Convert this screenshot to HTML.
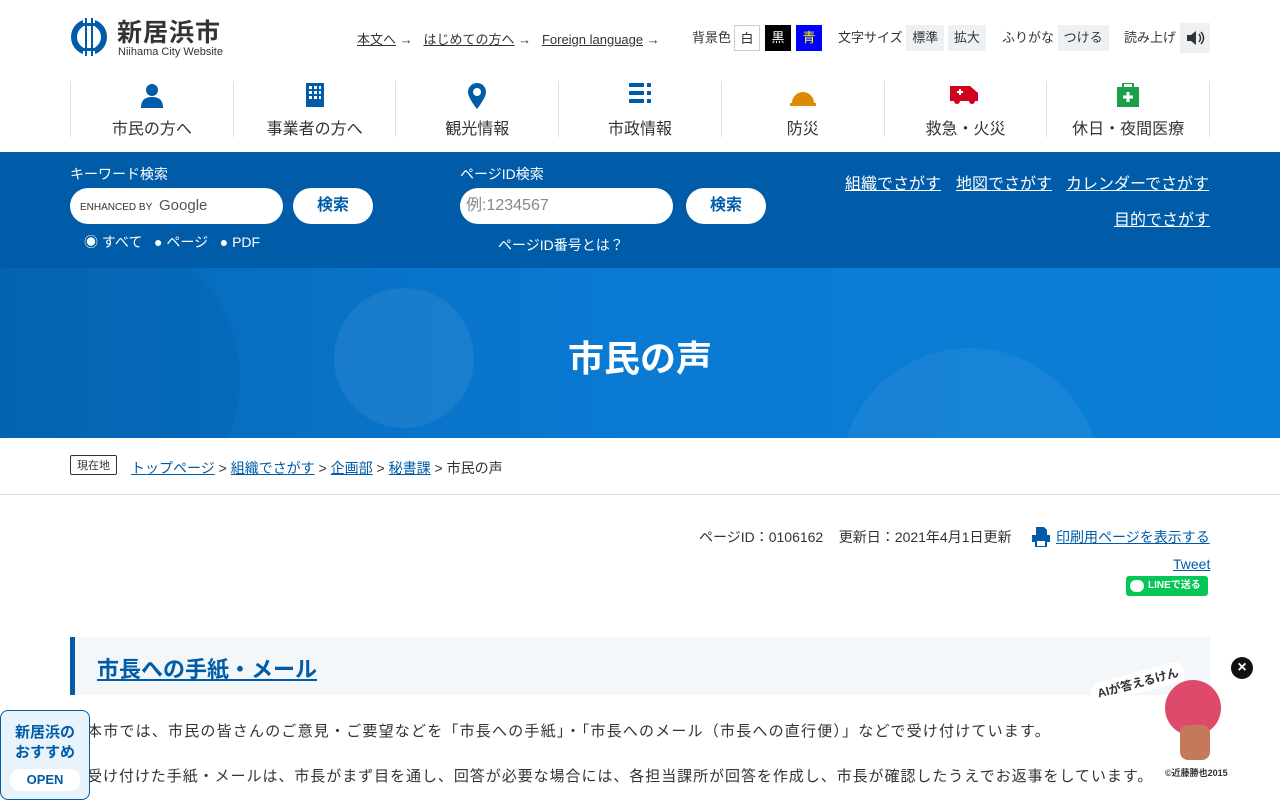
<!DOCTYPE html>
<html lang="ja"><head><meta charset="utf-8">
<style>
*{box-sizing:border-box;margin:0;padding:0}
body{width:1280px;height:800px;overflow:hidden;background:#fff;font-family:"Liberation Sans","Noto Sans CJK JP",sans-serif;color:#333;position:relative}
a{color:inherit}
.abs{position:absolute}
.top a{font-size:13px;color:#333}
.btn{display:inline-block;background:#eef1f4;font-size:13px;padding:0 6px;height:26px;line-height:26px}
.sq{position:absolute;top:25px;width:26px;height:26px;line-height:26px;text-align:center;font-size:13px}
.nav{position:absolute;top:81px;left:70px;width:1140px;height:56px;display:flex}
.nav div{flex:1;border-left:1px solid #d6e0ea;text-align:center;font-size:16px;color:#333;position:relative}
.nav div:last-child{border-right:1px solid #d6e0ea}
.nav span{position:absolute;top:34px;left:0;right:0}
.nav svg{position:absolute;top:2px;left:50%;transform:translateX(-50%)}
.sb{position:absolute;top:152px;left:0;width:1280px;height:116px;background:#005ca8;color:#fff}
.pill{position:absolute;background:#fff;border-radius:18px;height:36px}
.sbtn{position:absolute;background:#fff;border-radius:18px;height:36px;width:80px;color:#005ca8;font-weight:bold;font-size:16px;text-align:center;line-height:36px}
.hero{position:absolute;top:268px;left:0;width:1280px;height:170px;background:linear-gradient(90deg,#0568b8,#0a7ad3 50%,#0a7fd6);overflow:hidden}
.rl a{color:#fff;font-size:16px;position:absolute;white-space:nowrap}
</style></head><body>
<svg class="abs" style="left:70px;top:16px" width="38" height="42" viewBox="0 0 38 42"><circle cx="19" cy="21" r="15" fill="none" stroke="#005ca8" stroke-width="6"/><rect x="13" y="2" width="12" height="38" fill="#fff"/><rect x="15" y="2" width="2" height="38" fill="#005ca8"/><rect x="21" y="2" width="2" height="38" fill="#005ca8"/><rect x="13" y="7" width="12" height="3" fill="#005ca8"/><rect x="13" y="32" width="12" height="3" fill="#005ca8"/></svg>
<div class="abs" style="left:117px;top:13px;font-size:25px;font-weight:bold;color:#333;letter-spacing:1px">新居浜市</div>
<div class="abs" style="left:118px;top:46px;font-size:11px;color:#333">Niihama City Website</div>
<div class="abs top" style="left:357px;top:29px;font-size:13px"><a href="#">本文へ</a> → &nbsp;&nbsp;<a href="#">はじめての方へ</a> → &nbsp;&nbsp;<a href="#">Foreign language</a> →</div>
<div class="abs" style="left:692px;top:25px;font-size:13px;line-height:26px">背景色</div>
<div class="sq" style="left:734px;background:#fff;border:1px solid #ccc">白</div>
<div class="sq" style="left:765px;background:#000;color:#fff">黒</div>
<div class="sq" style="left:796px;background:#0000ff;color:#ff0">青</div>
<div class="abs" style="left:838px;top:25px;font-size:13px;line-height:26px">文字サイズ <span class="btn">標準</span> <span class="btn">拡大</span></div>
<div class="abs" style="left:1002px;top:25px;font-size:13px;line-height:26px">ふりがな <span class="btn">つける</span></div>
<div class="abs" style="left:1124px;top:23px;font-size:13px;line-height:30px">読み上げ</div>
<div class="abs" style="left:1180px;top:23px;width:30px;height:30px;background:#eef1f4"><svg width="30" height="30" viewBox="0 0 30 30"><path d="M7 12h4l5-4v14l-5-4H7z" fill="#333"/><path d="M19 11q3 4 0 8M21 9q5 6 0 12" stroke="#333" stroke-width="1.5" fill="none"/></svg></div>
<div class="nav">
<div><svg width="24" height="26" viewBox="0 0 24 26"><circle cx="12" cy="7" r="6" fill="#005ca8"/><path d="M1 25c0-8 4-11 11-11s11 3 11 11z" fill="#005ca8"/></svg><span>市民の方へ</span></div>
<div><svg width="18" height="24" viewBox="0 0 18 24"><rect width="18" height="24" fill="#005ca8"/><g fill="#fff"><rect x="3" y="3" width="3" height="3"/><rect x="8" y="3" width="3" height="3"/><rect x="13" y="3" width="2" height="3"/><rect x="3" y="8" width="3" height="3"/><rect x="8" y="8" width="3" height="3"/><rect x="13" y="8" width="2" height="3"/><rect x="3" y="13" width="3" height="3"/><rect x="8" y="13" width="3" height="3"/><rect x="13" y="13" width="2" height="3"/></g></svg><span>事業者の方へ</span></div>
<div><svg width="18" height="26" viewBox="0 0 18 26"><path d="M9 0a9 9 0 0 1 9 9c0 6-9 17-9 17S0 15 0 9a9 9 0 0 1 9-9z" fill="#005ca8"/><circle cx="9" cy="9" r="4" fill="#fff"/></svg><span>観光情報</span></div>
<div><svg width="22" height="20" viewBox="0 0 22 20"><g fill="#005ca8"><rect width="15" height="4"/><rect x="18" width="4" height="4"/><rect y="8" width="15" height="4"/><rect x="18" y="8" width="4" height="4"/><rect y="16" width="15" height="4"/><rect x="18" y="16" width="4" height="4"/></g></svg><span>市政情報</span></div>
<div><svg width="26" height="26" viewBox="0 0 26 26"><path d="M2 20a11 11 0 0 1 22 0z M0 20h26v3H0z" fill="#dd8a00"/></svg><span>防災</span></div>
<div><svg width="30" height="22" viewBox="0 0 30 22"><path d="M0 3h20l8 7v8H0z" fill="#d0021b"/><circle cx="7" cy="18" r="3" fill="#d0021b"/><circle cx="22" cy="18" r="3" fill="#d0021b"/><path d="M7 9h6M10 6v6" stroke="#fff" stroke-width="2"/></svg><span>救急・火災</span></div>
<div><svg width="22" height="24" viewBox="0 0 22 24"><rect y="4" width="22" height="20" fill="#1a9f4a"/><rect x="6" y="0" width="10" height="5" fill="none" stroke="#1a9f4a" stroke-width="2"/><path d="M11 9v10M6 14h10" stroke="#fff" stroke-width="3"/></svg><span>休日・夜間医療</span></div>
</div>
<div class="sb">
<div class="abs" style="left:70px;top:12px;font-size:14px">キーワード検索</div>
<div class="pill" style="left:70px;top:36px;width:213px;font-size:10px;color:#333;line-height:36px;padding-left:10px">ENHANCED BY <span style="font-size:15px;color:#555">&nbsp;Google</span></div>
<div class="sbtn" style="left:293px;top:36px">検索</div>
<div class="abs" style="left:84px;top:80px;font-size:14px">◉ すべて &nbsp;&nbsp;● ページ &nbsp;&nbsp;● PDF</div>
<div class="abs" style="left:460px;top:12px;font-size:14px">ページID検索</div>
<div class="pill" style="left:460px;top:36px;width:213px;font-size:16px;color:#888;line-height:36px;padding-left:6px">例:1234567</div>
<div class="sbtn" style="left:686px;top:36px">検索</div>
<div class="abs" style="left:498px;top:83px;font-size:14px">ページID番号とは？</div>
<div class="rl"><a href="#" style="left:845px;top:18px">組織でさがす</a><a href="#" style="left:956px;top:18px">地図でさがす</a><a href="#" style="left:1066px;top:18px">カレンダーでさがす</a><a href="#" style="left:1114px;top:54px">目的でさがす</a></div>
</div>
<div class="hero">
<div class="abs" style="left:334px;top:20px;width:140px;height:140px;border-radius:50%;background:rgba(255,255,255,.07)"></div>
<div class="abs" style="left:840px;top:80px;width:260px;height:260px;border-radius:50%;background:rgba(255,255,255,.06)"></div>
<div class="abs" style="left:-60px;top:-40px;width:300px;height:300px;border-radius:50%;background:rgba(0,0,0,.04)"></div>
<div class="abs" style="left:0;right:0;top:62px;text-align:center;color:#fff;font-size:36px;font-weight:bold">市民の声</div>
</div>
<div class="abs" style="left:70px;top:455px;font-size:11px;border:1px solid #333;border-radius:2px;padding:1px 6px">現在地</div>
<div class="abs" style="left:131px;top:458px;font-size:14px;color:#333"><a href="#" style="color:#005ca8">トップページ</a> &gt; <a href="#" style="color:#005ca8">組織でさがす</a> &gt; <a href="#" style="color:#005ca8">企画部</a> &gt; <a href="#" style="color:#005ca8">秘書課</a> &gt; 市民の声</div>
<div class="abs" style="left:0;top:494px;width:1280px;height:1px;background:#ddd"></div>
<div class="abs" style="left:699px;top:527px;font-size:14px">ページID：0106162 &nbsp;&nbsp;&nbsp;更新日：2021年4月1日更新</div>
<svg class="abs" style="left:1032px;top:527px" width="18" height="20" viewBox="0 0 18 20"><path d="M4 0h8l3 3v5H4z M0 8h18v7h-3v5H3v-5H0z" fill="#005ca8"/><rect x="5" y="14" width="8" height="5" fill="#fff"/></svg>
<a class="abs" href="#" style="left:1056px;top:527px;font-size:14px;color:#005ca8">印刷用ページを表示する</a>
<a class="abs" href="#" style="left:1173px;top:556px;font-size:14px;color:#005ca8">Tweet</a>
<div class="abs" style="left:1126px;top:576px;width:82px;height:20px;background:#06c755;border-radius:3px;color:#fff;font-size:10px;font-weight:bold;line-height:20px;padding-left:22px">LINEで送る</div>
<div class="abs" style="left:1130px;top:580px;width:14px;height:12px;border-radius:6px;background:#fff"></div>
<div class="abs" style="left:70px;top:637px;width:1140px;height:58px;background:#f3f7fa;border-left:5px solid #005ca8"></div>
<a class="abs" href="#" style="left:97px;top:652px;font-size:22px;font-weight:bold;color:#005ca8">市長への手紙・メール</a>
<div class="abs" style="left:87px;top:720px;font-size:15px;letter-spacing:1.2px;white-space:nowrap">本市では、市民の皆さんのご意見・ご要望などを「市長への手紙」・「市長へのメール（市長への直行便）」などで受け付けています。</div>
<div class="abs" style="left:87px;top:765px;font-size:15px;letter-spacing:0.95px;white-space:nowrap">受け付けた手紙・メールは、市長がまず目を通し、回答が必要な場合には、各担当課所が回答を作成し、市長が確認したうえでお返事をしています。</div>
<div class="abs" style="left:0;top:710px;width:90px;height:90px;background:#e8f3fc;border:1px solid #005ca8;border-radius:8px;text-align:center;color:#005ca8;font-size:15px;font-weight:bold;line-height:20px;padding-top:12px">新居浜の<br>おすすめ<div style="margin:6px 9px 0;background:#fff;border-radius:10px;font-size:13px;line-height:22px">OPEN</div></div>
<div class="abs" style="left:1231px;top:657px;width:22px;height:22px;border-radius:50%;background:#111;color:#fff;font-size:16px;text-align:center;line-height:22px;font-weight:bold">×</div>
<div class="abs" style="left:1090px;top:672px;font-size:12px;font-weight:bold;transform:rotate(-15deg);background:#fff;padding:2px 6px;border-radius:10px">AIが答えるけん</div>
<div class="abs" style="left:1165px;top:680px;width:56px;height:56px;border-radius:50%;background:#e04a6a"></div>
<div class="abs" style="left:1180px;top:725px;width:30px;height:35px;background:#c47a5a;border-radius:8px"></div>
<div class="abs" style="left:1165px;top:766px;font-size:9px;font-weight:bold">©近藤勝也2015</div>
</body></html>
